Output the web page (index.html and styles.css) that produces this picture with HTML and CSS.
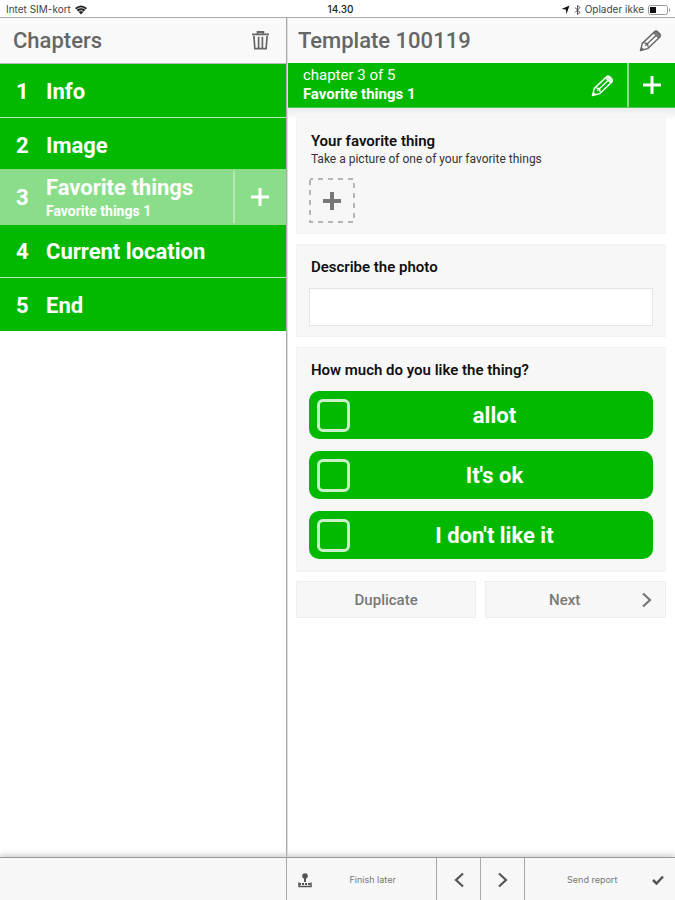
FILE: index.html
```html
<!DOCTYPE html>
<html lang="en">
<head>
<meta charset="utf-8">
<meta name="viewport" content="width=device-width, initial-scale=1">
<title>Template 100119</title>
<link rel="stylesheet" href="styles.css">
</head>
<body>
<svg class="sprite" aria-hidden="true">
  <symbol id="pencil" viewBox="0 0 24 24">
    <path d="M1.500 22.500l2-7.500L16.500 2.500q1.500-1 3 .5l2 2q1.500 1.500 .5 3L9 20.500z" fill="none" stroke="currentColor" stroke-width="1.500" stroke-linejoin="round"/>
    <path d="M6.500 17.500L17.500 7M5.500 14.500l3.500 1 .5 3.500" fill="none" stroke="currentColor" stroke-width="1.300"/>
    <path d="M14.500 4.500l2-2q1.500-1 3 .5l2 2q1.500 1.500 .5 3l-2 2z" fill="currentColor" opacity=".85"/>
    <path d="M1.500 22.500l1-4 3 3z" fill="currentColor"/>
  </symbol>
  <symbol id="plus" viewBox="0 0 20 20">
    <path d="M10 1v18M1 10h18" fill="none" stroke="currentColor" stroke-width="3"/>
  </symbol>
  <symbol id="right" viewBox="0 0 12 16">
    <path d="M2 1.500L9 8l-7 6.500" fill="none" stroke="currentColor" stroke-width="2.200"/>
  </symbol>
  <symbol id="left" viewBox="0 0 12 16">
    <path d="M10 1.500L3 8l7 6.500" fill="none" stroke="currentColor" stroke-width="2.200"/>
  </symbol>
</svg>

<div class="status">
  <div class="status-side">
    <span>Intet SIM-kort</span>
    <svg width="12" height="10" viewBox="0 0 12 10" aria-hidden="true"><path d="M6 9.500L0 3q6-5 12 0z" fill="#222"/><path d="M1.500 4.500q4.500-3.500 9 0M3.500 6.500q2.500-2 5 0" fill="none" stroke="#fff" stroke-width=".8"/></svg>
  </div>
  <span class="clock">14.30</span>
  <div class="status-side status-end">
    <svg width="9" height="9" viewBox="0 0 9 9" aria-hidden="true"><path d="M8.500.5L5.500 9 4.800 4.500.5 4z" fill="#111"/></svg>
    <svg width="7" height="10" viewBox="0 0 7 10" aria-hidden="true"><path d="M1 2.500l5 5L3.500 9.500v-9L6 2.500l-5 5" fill="none" stroke="#555"/></svg>
    <span>Oplader ikke</span>
    <svg width="23" height="10" viewBox="0 0 23 10" aria-hidden="true"><rect x=".5" y=".5" width="19" height="9" rx="2" fill="none" stroke="#999"/><rect x="2" y="2" width="6" height="6" fill="#111"/><path d="M21.500 3.500v3" stroke="#999"/></svg>
  </div>
</div>

<div class="app">
  <aside class="sidebar">
    <header class="bar">
      <h2>Chapters</h2>
      <button class="icon-button" aria-label="Delete">
        <svg width="17" height="19" viewBox="0 0 18 20" aria-hidden="true"><path d="M0 3.500h18M6 2.500V1h6v1.500" fill="none" stroke="currentColor" stroke-width="2"/><path d="M2 5l1 13.500h12L16 5M7 6v12M11 6v12" fill="none" stroke="currentColor" stroke-width="1.800"/></svg>
      </button>
    </header>
    <ol class="chapters">
      <li class="row"><button class="chapter"><span class="num">1</span><span>Info</span></button></li>
      <li class="row"><button class="chapter"><span class="num">2</span><span>Image</span></button></li>
      <li class="row selected">
        <button class="chapter"><span class="num">3</span><span class="names">Favorite things<small>Favorite things 1</small></span></button>
        <button class="add" aria-label="Add chapter"><svg width="20" height="20" aria-hidden="true"><use href="#plus"/></svg></button>
      </li>
      <li class="row"><button class="chapter"><span class="num">4</span><span>Current location</span></button></li>
      <li class="row"><button class="chapter"><span class="num">5</span><span>End</span></button></li>
    </ol>
  </aside>

  <main class="main">
    <header class="bar">
      <h1>Template 100119</h1>
      <button class="icon-button" aria-label="Edit template"><svg width="23" height="23" aria-hidden="true"><use href="#pencil"/></svg></button>
    </header>
    <div class="current">
      <div class="current-text"><span>chapter 3 of 5</span><strong>Favorite things 1</strong></div>
      <button class="current-edit" aria-label="Edit chapter"><svg width="23" height="23" aria-hidden="true"><use href="#pencil"/></svg></button>
      <button class="current-add" aria-label="Add chapter"><svg width="20" height="20" aria-hidden="true"><use href="#plus"/></svg></button>
    </div>
    <div class="content">
      <section class="card picture">
        <h3>Your favorite thing</h3>
        <p>Take a picture of one of your favorite things</p>
        <button class="photo" aria-label="Add picture">
          <svg width="46" height="45" viewBox="0 0 46 45" aria-hidden="true"><rect x="1" y="1" width="44" height="43" fill="none" stroke="#b5b5b5" stroke-width="2" stroke-dasharray="5 5" stroke-dashoffset="2"/><path d="M23 14v18M14 23h18" stroke="#777" stroke-width="4"/></svg>
        </button>
      </section>
      <section class="card describe">
        <label for="describe">Describe the photo</label>
        <input class="field" id="describe" type="text">
      </section>
      <fieldset class="card question">
        <legend>How much do you like the thing?</legend>
        <label class="option"><input type="checkbox"><span>allot</span></label>
        <label class="option"><input type="checkbox"><span>It's ok</span></label>
        <label class="option"><input type="checkbox"><span>I don't like it</span></label>
      </fieldset>
      <div class="actions">
        <button>Duplicate</button>
        <button class="next"><span>Next</span><svg width="12" height="16" aria-hidden="true"><use href="#right"/></svg></button>
      </div>
    </div>
  </main>
</div>

<footer class="footer">
  <div class="footer-side"></div>
  <div class="footer-main">
    <button class="wide"><svg width="14" height="15" viewBox="0 0 14 15" aria-hidden="true"><circle cx="7" cy="3" r="2.800" fill="currentColor"/><path d="M7 4v5" stroke="currentColor" stroke-width="2"/><path d="M1 9.500v4h12v-4" fill="none" stroke="currentColor" stroke-width="1.500"/><path d="M1 11h12" stroke="currentColor" stroke-width="2" stroke-dasharray="2 1"/></svg><span>Finish later</span></button>
    <button class="step" aria-label="Previous"><svg width="12" height="16" aria-hidden="true"><use href="#left"/></svg></button>
    <button class="step" aria-label="Next page"><svg width="12" height="16" aria-hidden="true"><use href="#right"/></svg></button>
    <button class="wide send"><span>Send report</span><svg width="12" height="10" viewBox="0 0 12 10" aria-hidden="true"><path d="M1 5l3.500 3.500L11 1.500" fill="none" stroke="currentColor" stroke-width="2.500"/></svg></button>
  </div>
</footer>
</body>
</html>
```
FILE: styles.css
```css
* { box-sizing: border-box; }

:root {
  --green: #02b900;
  --panel: #f7f7f7;
  --grey: #666;
  --side: 42.5%;
}

body {
  margin: 0;
  min-height: 100vh;
  display: flex;
  flex-direction: column;
  background: #fff;
  color: #111;
  font-family: Roboto, "Liberation Sans", sans-serif;
}

h1, h2, h3, p, ol, fieldset { margin: 0; padding: 0; }
svg { display: block; flex: none; }
.sprite { position: absolute; width: 0; height: 0; }

button {
  margin: 0;
  padding: 0;
  border: 0;
  background: none;
  color: inherit;
  font: inherit;
  cursor: pointer;
}

.status {
  display: flex;
  align-items: center;
  height: 18px;
  padding: 2px 4px 0 6px;
  border-bottom: 1px solid #aaa;
  color: #444;
  font: 10px/15px Inter, sans-serif;
}
.status-side { flex: 1; display: flex; align-items: center; gap: 4px; }
.status-end { justify-content: flex-end; }
.clock { padding-left: 4px; font-weight: 500; color: #222; }

.app { flex: 1; display: flex; }
.sidebar { flex: 0 0 var(--side); border-right: 1px solid #aaa; }
.main { flex: 1; min-width: 0; border-left: 1px solid #ddd; }

.bar {
  display: flex;
  align-items: center;
  justify-content: space-between;
  height: 45px;
  padding: 0 17px 0 13px;
  background: #f9f9f9;
  color: var(--grey);
}
.bar h1, .bar h2 { font-size: 22px; line-height: 28px; font-weight: 500; }
.sidebar .bar { height: 46px; border-bottom: 1px solid #bbb; }
.main .bar { padding-left: 10px; padding-right: 13px; }

.chapters { list-style: none; color: #fff; }
.row { display: flex; height: 53px; background: var(--green); }
.row + .row { height: 54px; border-top: 1px solid #b5e8b4; }
.row + .row.selected { height: 56px; background: #8ade89; border-top: 0; margin-top: -2px; }
.row.selected + .row { height: 52px; border-top: 0; }
.chapter {
  flex: 1;
  display: flex;
  align-items: center;
  padding: 2px 0 0 16px;
  text-align: left;
  font-size: 22px;
  line-height: 26px;
  font-weight: 700;
}
.num { width: 30px; }
.names small { display: block; font-size: 14px; line-height: 20px; }
.add { flex: 0 0 53px; display: grid; place-items: center; margin: 2px 0; border-left: 2px solid #b5e8b4; }

.current { display: flex; height: 45px; background: var(--green); color: #fff; border-bottom: 1px solid #55c754; }
.current-text { flex: 1; display: flex; flex-direction: column; justify-content: center; padding-left: 15px; font-size: 15px; line-height: 19px; }
.current-edit { flex: 0 0 50px; display: grid; place-items: center; }
.current-add { flex: 0 0 48px; display: grid; place-items: center; border-left: 2px solid #8ade89; }

.content {
  display: flex;
  flex-direction: column;
  gap: 10px;
  padding: 8px 9px 20px 8px;
  background: linear-gradient(#eaeaea, #fff 12px);
}
.card {
  min-width: 0;
  padding: 12px;
  border: 1px solid #f2f2f2;
  background: var(--panel);
}
.card h3, .describe label, .question legend { padding: 0 0 0 2px; font-size: 15px; line-height: 20px; font-weight: 600; }
.card p { padding-left: 2px; font-size: 12px; line-height: 16px; color: #333; }
.picture { padding-top: 14px; padding-bottom: 10px; }
.photo { display: block; margin-top: 11px; }
.describe { padding-bottom: 10px; }
.describe label { display: block; margin-bottom: 11px; }
.field { display: block; width: 100%; height: 38px; padding: 0 10px; border: 1px solid #e5e5e5; background: #fff; font: inherit; font-size: 15px; }

.question { display: flex; flex-direction: column; gap: 12px; }
.question legend { float: left; width: 100%; margin-bottom: -1px; }
.option { display: flex; align-items: center; height: 48px; padding: 0 8px; border-radius: 10px; background: var(--green); color: #fff; font-size: 22px; font-weight: 700; }
.option span { flex: 1; text-align: center; padding-right: 6px; }
.option input { appearance: none; flex: none; width: 33px; height: 33px; margin: 0; border: 3px solid #c9f0c9; border-radius: 6px; }
.option input:checked { background: #fff; }

.actions { display: grid; grid-template-columns: 1fr 1fr; gap: 9px; margin-top: -1px; color: #777; font-size: 15px; font-weight: 500; }
.actions button { height: 37px; border: 1px solid #eee; background: var(--panel); }
.actions .next { display: flex; align-items: center; padding: 0 12px 0 2px; }
.next span { flex: 1; }

.footer {
  position: relative;
  display: flex;
  height: 43px;
  border-top: 1px solid #999;
  background: var(--panel);
  color: #555;
  box-shadow: 0 -2px 6px #ccc;
}
.footer-side { flex: 0 0 var(--side); border-right: 1px solid #aaa; }
.footer-main { flex: 1; display: flex; }
.footer-main button { display: flex; align-items: center; justify-content: center; padding-top: 2px; }
.footer-main button + button { border-left: 1px solid #aaa; }
.footer-main .wide { flex: 1; padding: 2px 11px 0; font: 9px/14px Inter, sans-serif; color: #777; }
.wide span { flex: 1; padding-left: 8px; }
.send span { padding: 0 4px 0 0; }
.wide svg { color: #555; }
.footer-main .step { flex: 0 0 44px; }
```
